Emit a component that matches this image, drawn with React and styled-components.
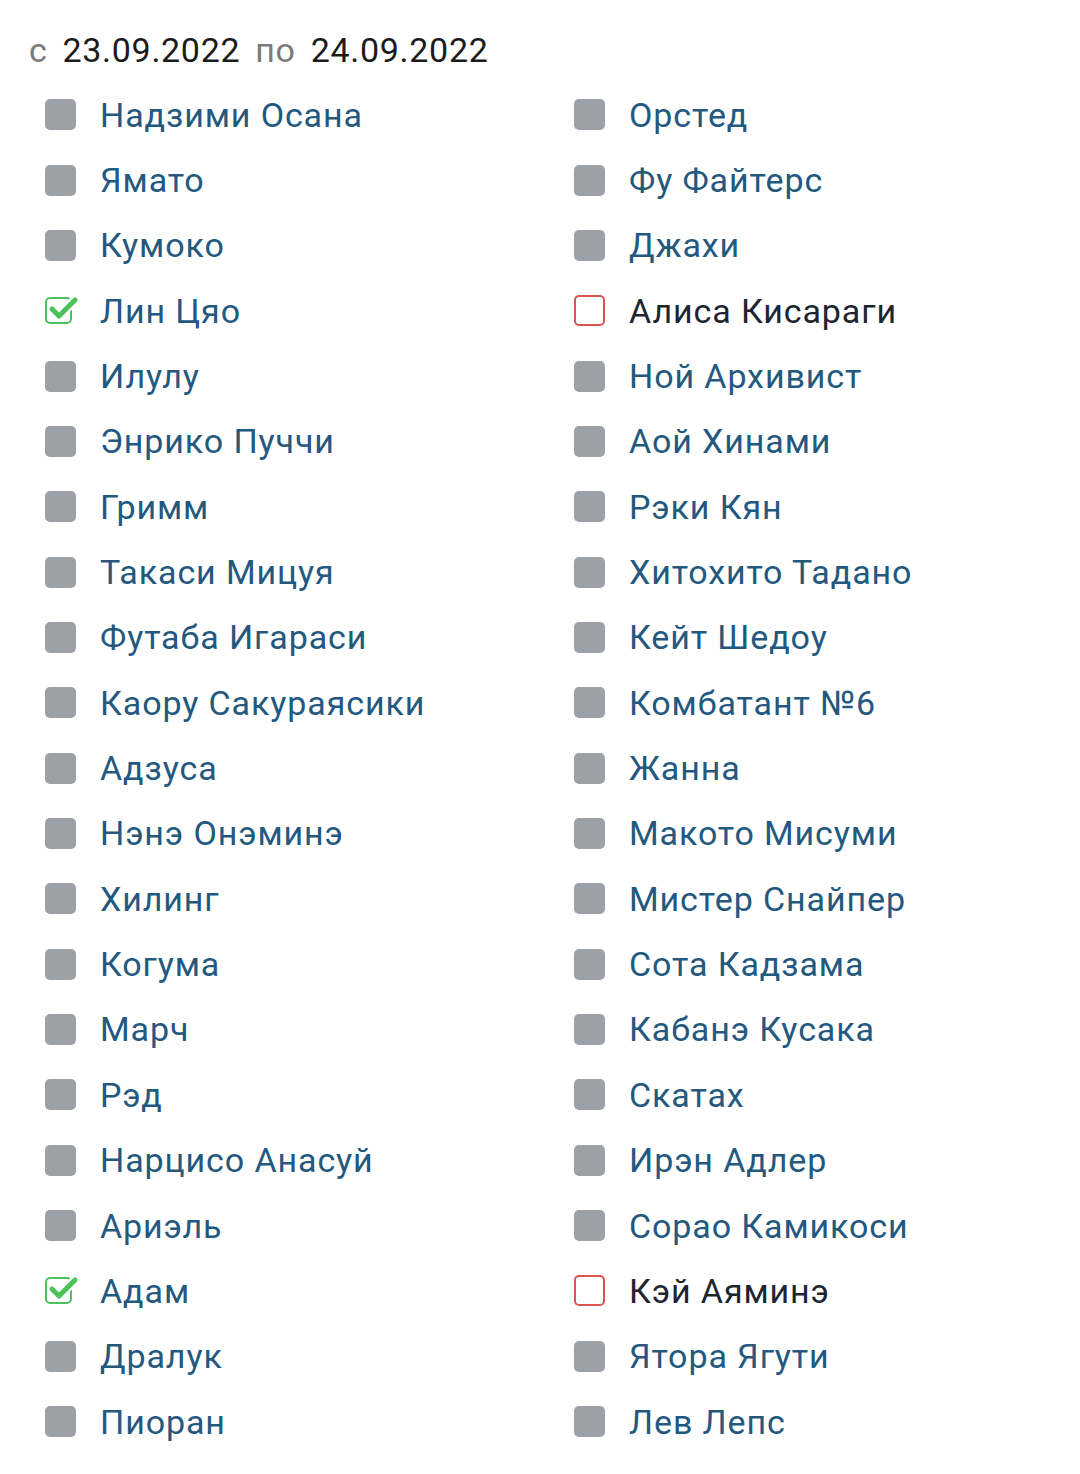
import React from 'react';
import styled, { createGlobalStyle } from 'styled-components';

// ---- data
const left = [
  ['Надзими Осана'], ['Ямато'], ['Кумоко'], ['Лин Цяо', 'yes'], ['Илулу'],
  ['Энрико Пуччи'], ['Гримм'], ['Такаси Мицуя'], ['Футаба Игараси'],
  ['Каору Сакураясики'], ['Адзуса'], ['Нэнэ Онэминэ'], ['Хилинг'], ['Когума'],
  ['Марч'], ['Рэд'], ['Нарцисо Анасуй'], ['Ариэль'], ['Адам', 'yes'],
  ['Дралук'], ['Пиоран'],
];

const right = [
  ['Орстед'], ['Фу Файтерс'], ['Джахи'], ['Алиса Кисараги', 'no'],
  ['Ной Архивист'], ['Аой Хинами'], ['Рэки Кян'], ['Хитохито Тадано'],
  ['Кейт Шедоу'], ['Комбатант №6'], ['Жанна'], ['Макото Мисуми'],
  ['Мистер Снайпер'], ['Сота Кадзама'], ['Кабанэ Кусака'], ['Скатах'],
  ['Ирэн Адлер'], ['Сорао Камикоси'], ['Кэй Аяминэ', 'no'], ['Ятора Ягути'],
  ['Лев Лепс'],
];

const GlobalStyle = createGlobalStyle`
  body {
    margin: 0;
    background: #fff;
    font-family: Roboto, "Noto Sans", sans-serif;
  }
`;

const Page = styled.div`
  padding: 17px 0 0 29px;
`;

const Header = styled.div`
  height: 65px;
  display: flex;
  align-items: center;
  gap: 15px;
  font-size: 34px;
  letter-spacing: 0.7px;
  color: #1b1b1b;
`;

const Muted = styled.span`
  color: #7a7a7a;
`;

const Columns = styled.div`
  display: grid;
  grid-template-columns: 529px 1fr;
  padding-left: 16px;
`;

const Column = styled.div`
  display: grid;
  grid-auto-rows: 65.35px;
`;

const Row = styled.div`
  display: flex;
  align-items: center;
  gap: 24px;
  font-size: 34px;
  letter-spacing: 0.9px;
  color: ${p => (p.$state === 'no' ? '#1c2530' : '#23587f')};
`;

const Slot = styled.span`
  width: 31px;
  height: 31px;
  flex: none;
  display: flex;
  align-items: center;
  position: relative;
`;

const Box = styled.span`
  width: ${p => (p.$state === 'yes' ? '27px' : '31px')};
  height: ${p => (p.$state === 'yes' ? '27px' : '31px')};
  box-sizing: border-box;
  border-radius: 5px;
  background: ${p => (p.$state ? 'transparent' : '#9ca0a7')};
  border: ${p =>
    p.$state === 'no' ? '2.5px solid #d95550' : p.$state === 'yes' ? '2.5px solid #4cc35a' : 'none'};
`;

const Tick = styled.svg`
  position: absolute;
  left: 1px;
  top: -1px;
`;

const Check = ({ state }) => (
  <Slot>
    <Box $state={state} />
    {state === 'yes' && (
      <Tick width="36" height="30" viewBox="0 0 36 30">
        <path d="M6 15 L13 22 L29 6" fill="none" stroke="#fff" strokeWidth="9" strokeLinecap="round" strokeLinejoin="round" />
        <path d="M6 15 L13 22 L29 6" fill="none" stroke="#4cc35a" strokeWidth="5" strokeLinecap="round" strokeLinejoin="round" />
      </Tick>
    )}
  </Slot>
);

const List = ({ items }) => (
  <Column>
    {items.map(([name, state]) => (
      <Row key={name} $state={state}>
        <Check state={state} />
        {name}
      </Row>
    ))}
  </Column>
);

const App = () => (
  <Page>
    <GlobalStyle />
    <Header>
      <Muted>с</Muted>
      23.09.2022
      <Muted>по</Muted>
      24.09.2022
    </Header>
    <Columns>
      <List items={left} />
      <List items={right} />
    </Columns>
  </Page>
);

export default App;
